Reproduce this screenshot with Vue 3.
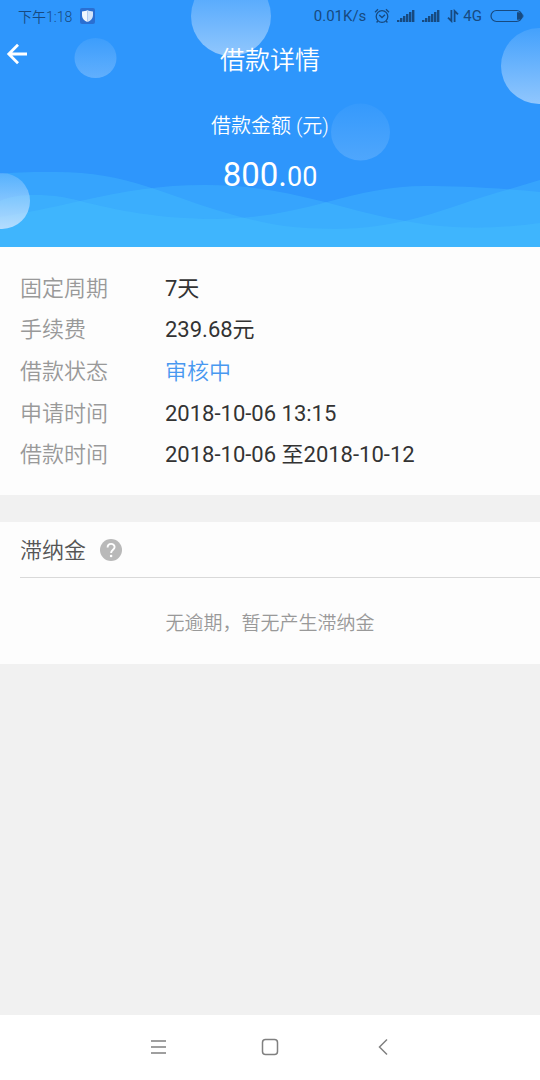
<script setup>
const details = [
  { label: '固定周期', value: '7天' },
  { label: '手续费', value: '239.68元' },
  { label: '借款状态', value: '审核中', active: true },
  { label: '申请时间', value: '2018-10-06 13:15' },
  { label: '借款时间', value: '2018-10-06 至2018-10-12' },
]
const bars = [0, 1, 2, 3, 4, 5]
</script>

<template>
  <div class="page">
    <header class="hero">
      <svg class="art" viewBox="0 0 540 247" preserveAspectRatio="xMidYMax slice" aria-hidden="true">
        <defs>
          <linearGradient id="bubble" x1="0" y1="0" x2="0" y2="1">
            <stop offset="0" stop-color="#e4f0ff" stop-opacity="0.12" />
            <stop offset="1" stop-color="#e4f0ff" stop-opacity="0.54" />
          </linearGradient>
          <linearGradient id="bubbleSoft" x1="0" y1="0" x2="0" y2="1">
            <stop offset="0" stop-color="#e4f0ff" stop-opacity="0.08" />
            <stop offset="1" stop-color="#e4f0ff" stop-opacity="0.28" />
          </linearGradient>
          <linearGradient id="bubbleFaint" x1="0" y1="0" x2="0" y2="1">
            <stop offset="0" stop-color="#e4f0ff" stop-opacity="0.04" />
            <stop offset="1" stop-color="#e4f0ff" stop-opacity="0.18" />
          </linearGradient>
          <linearGradient id="bubbleBright" x1="0" y1="0" x2="0" y2="1">
            <stop offset="0" stop-color="#d8e8ff" stop-opacity="0.2" />
            <stop offset="1" stop-color="#d8e8ff" stop-opacity="0.76" />
          </linearGradient>
        </defs>
        <g class="waves">
          <path d="M0 174C20 172 35 172 55 172C130 172 165 196 230 214C275 227 300 229 335 229C365 229 385 225 405 221C440 213 475 198 510 189C520 186 530 183 540 180V247H0Z" />
          <path d="M0 217C25 213 50 208 80 201C125 191 160 185 205 185C250 185 285 192 325 202C355 210 380 217 405 221C450 230 500 229 540 223V247H0Z" />
          <path d="M0 201C10 196 22 195 35 195C52 195 65 197 80 201C115 210 160 219 215 219C255 219 290 212 327 202C360 193 390 186 425 186C455 186 500 188 540 192V247H0Z" />
        </g>
        <circle cx="231" cy="16" r="40" fill="url(#bubble)" />
        <ellipse cx="95.500" cy="58" rx="21" ry="20" fill="url(#bubbleSoft)" />
        <circle cx="539" cy="66" r="38" fill="url(#bubble)" />
        <ellipse cx="360.500" cy="132" rx="29.500" ry="28.500" fill="url(#bubbleFaint)" />
        <circle cx="2" cy="201" r="28" fill="url(#bubbleBright)" />
      </svg>

      <div class="status">
        <span class="time">下午1:18</span>
        <svg class="shield" width="15" height="16" viewBox="0 0 15 16" aria-hidden="true">
          <rect width="15" height="16" rx="2" fill="#2a6fd2" />
          <path d="M7.500 2C6 3 4 3.400 2 3.500V7C2 10.500 4.500 13 7.500 14Z" fill="#f2f7fd" />
          <path d="M7.500 2C9 3 11 3.400 13 3.500V7C13 10.500 10.500 13 7.500 14Z" fill="#d3e4f9" />
        </svg>
        <span class="speed">0.01K/s</span>
        <svg class="alarm" width="16" height="16" viewBox="0 0 16 16" fill="none" stroke="currentColor" aria-hidden="true">
          <circle cx="8" cy="8.500" r="5.800" stroke-width="1.300" />
          <path d="M1 4.200L4 1.300M15 4.200L12 1.300M3.800 13L2.600 14.500M12.200 13L13.400 14.500M5.200 7L8 9.600L11 6.800" stroke-width="1.300" />
        </svg>
        <svg v-for="n in 2" :key="n" class="signal" width="18" height="14" viewBox="0 0 18 14" fill="currentColor" aria-hidden="true">
          <rect v-for="i in bars" :key="i" :x="i * 3" :y="11 - i * 2" width="2.400" :height="2 + i * 2" />
        </svg>
        <svg class="data" width="12" height="14" viewBox="0 0 12 14" fill="none" stroke="currentColor" stroke-width="1.800" aria-hidden="true">
          <path d="M4.400 1V12L1 8.600M7.600 13V2L11 5.400" />
        </svg>
        <span class="net">4G</span>
        <svg class="battery" width="34" height="14" viewBox="0 0 34 14" aria-hidden="true">
          <rect x="1" y="1.500" width="31" height="11" rx="5.500" fill="none" stroke="currentColor" stroke-width="1.200" />
          <path d="M27 3.300H28.500A3.700 3.700 0 0 1 28.500 10.700H27ZM32.400 4.500Q34.500 7 32.400 9.500Z" fill="currentColor" />
        </svg>
      </div>

      <div class="bar">
        <button class="back" type="button" aria-label="返回">
          <svg width="22" height="22" viewBox="0 0 22 22" fill="none" stroke="#fff" stroke-width="2.800" aria-hidden="true">
            <path d="M21 11H3M12 1.800L2.800 11L12 20.200" />
          </svg>
        </button>
        <h1>借款详情</h1>
      </div>
      <p class="caption">借款金额 (元)</p>
      <p class="amount">800.<small>00</small></p>
    </header>

    <main>
      <dl class="details">
        <div v-for="d in details" :key="d.label" class="row">
          <dt>{{ d.label }}</dt>
          <dd :class="{ active: d.active }">{{ d.value }}</dd>
        </div>
      </dl>

      <section class="late">
        <div class="late-head">
          <h2>滞纳金</h2>
          <button type="button" class="help" aria-label="滞纳金说明">
            <svg width="22" height="22" viewBox="0 0 22 22" aria-hidden="true">
              <circle cx="11" cy="11" r="11" fill="#b9b9b9" />
              <path d="M7.600 8.400C7.600 3.700 14.600 3.900 14.600 8C14.600 10.700 11.100 10.700 11.100 14" fill="none" stroke="#fff" stroke-width="1.900" />
              <circle cx="11.100" cy="17" r="1.300" fill="#fff" />
            </svg>
          </button>
        </div>
        <p class="empty">无逾期，暂无产生滞纳金</p>
      </section>
    </main>

    <nav class="system">
      <button type="button" aria-label="菜单">
        <svg width="18" height="18" viewBox="0 0 18 18" fill="none" stroke="currentColor" stroke-width="1.500"><path d="M2 3H17M2 9H17M2 15H17" /></svg>
      </button>
      <button type="button" aria-label="主页">
        <svg width="18" height="18" viewBox="0 0 18 18" fill="none" stroke="currentColor" stroke-width="1.500"><rect x="1.500" y="1.500" width="15" height="15" rx="3" /></svg>
      </button>
      <button type="button" aria-label="后退">
        <svg width="18" height="18" viewBox="0 0 18 18" fill="none" stroke="currentColor" stroke-width="1.500"><path d="M14 1.500L6.500 9L14 16.500" /></svg>
      </button>
    </nav>
  </div>
</template>

<style scoped>
.page {
  display: flex;
  flex-direction: column;
  min-height: 100vh;
  background: #f1f1f1;
  color: #333;
  font-family: Roboto, "Noto Sans CJK SC", sans-serif;
}
h1, h2, p, dl, dt, dd { margin: 0; font-weight: 400; }
button {
  display: flex;
  align-items: center;
  justify-content: center;
  padding: 0;
  border: 0;
  background: none;
  color: inherit;
}
svg { flex: none; }
.hero {
  position: relative;
  min-height: 247px;
  background: #2e96fc;
  color: #fff;
  text-align: center;
}
.art {
  position: absolute;
  inset: 0;
  width: 100%;
  height: 100%;
}
.waves { fill: #48c6ff; fill-opacity: 0.3; }
.status, .bar, .caption, .amount { position: relative; }
.status {
  display: flex;
  align-items: center;
  height: 32px;
  padding: 0 16px 0 18px;
  color: #174a80;
  font-size: 15px;
}
.time { font-size: 14px; font-weight: 350; }
.shield { margin-left: 8px; }
.speed { margin-left: auto; }
.alarm { margin-left: 8px; }
.signal { margin-left: 7px; }
.data { margin-left: 7px; }
.net { margin-left: 4px; }
.battery { margin-left: 8px; }
.bar {
  display: grid;
  grid-template-columns: 44px 1fr 44px;
  min-height: 58px;
}
.back {
  height: 44px;
  justify-content: flex-start;
  padding-left: 6px;
}
h1 {
  font-size: 25px;
  line-height: 58px;
  font-weight: 350;
}
.caption { padding-top: 20px; font-size: 20px; line-height: 32px; font-weight: 350; }
.amount { padding-top: 9px; font-size: 33px; line-height: 48px; }
.amount small { font-size: 27px; }
.details {
  display: grid;
  box-sizing: border-box;
  min-height: 248px;
  padding: 21px 20px 19px;
  background: #fdfdfd;
  font-size: 22px;
  line-height: 32px;
}
.row {
  display: grid;
  grid-template-columns: 145px 1fr;
  align-items: baseline;
  align-content: center;
}
dt { color: #999; font-weight: 350; }
dd.active { color: #4898f0; font-weight: 350; }
.late {
  margin-top: 27px;
  background: #fdfdfd;
}
.late-head {
  display: flex;
  align-items: center;
  gap: 14px;
  height: 55px;
  margin-left: 20px;
  border-bottom: 1px solid #d9d9d9;
}
h2 { padding-top: 3px; font-size: 22px; line-height: 32px; font-weight: 350; color: #555; }
.empty {
  padding: 31px 0 25px;
  color: #999;
  font-size: 19px;
  font-weight: 350;
  line-height: 30px;
  text-align: center;
}
.system {
  display: flex;
  justify-content: center;
  gap: 68px;
  box-sizing: border-box;
  height: 65px;
  margin-top: auto;
  padding-bottom: 2px;
  background: #fff;
  color: #808080;
}
.system button { width: 44px; }
</style>
<style>
body { margin: 0; }
</style>
